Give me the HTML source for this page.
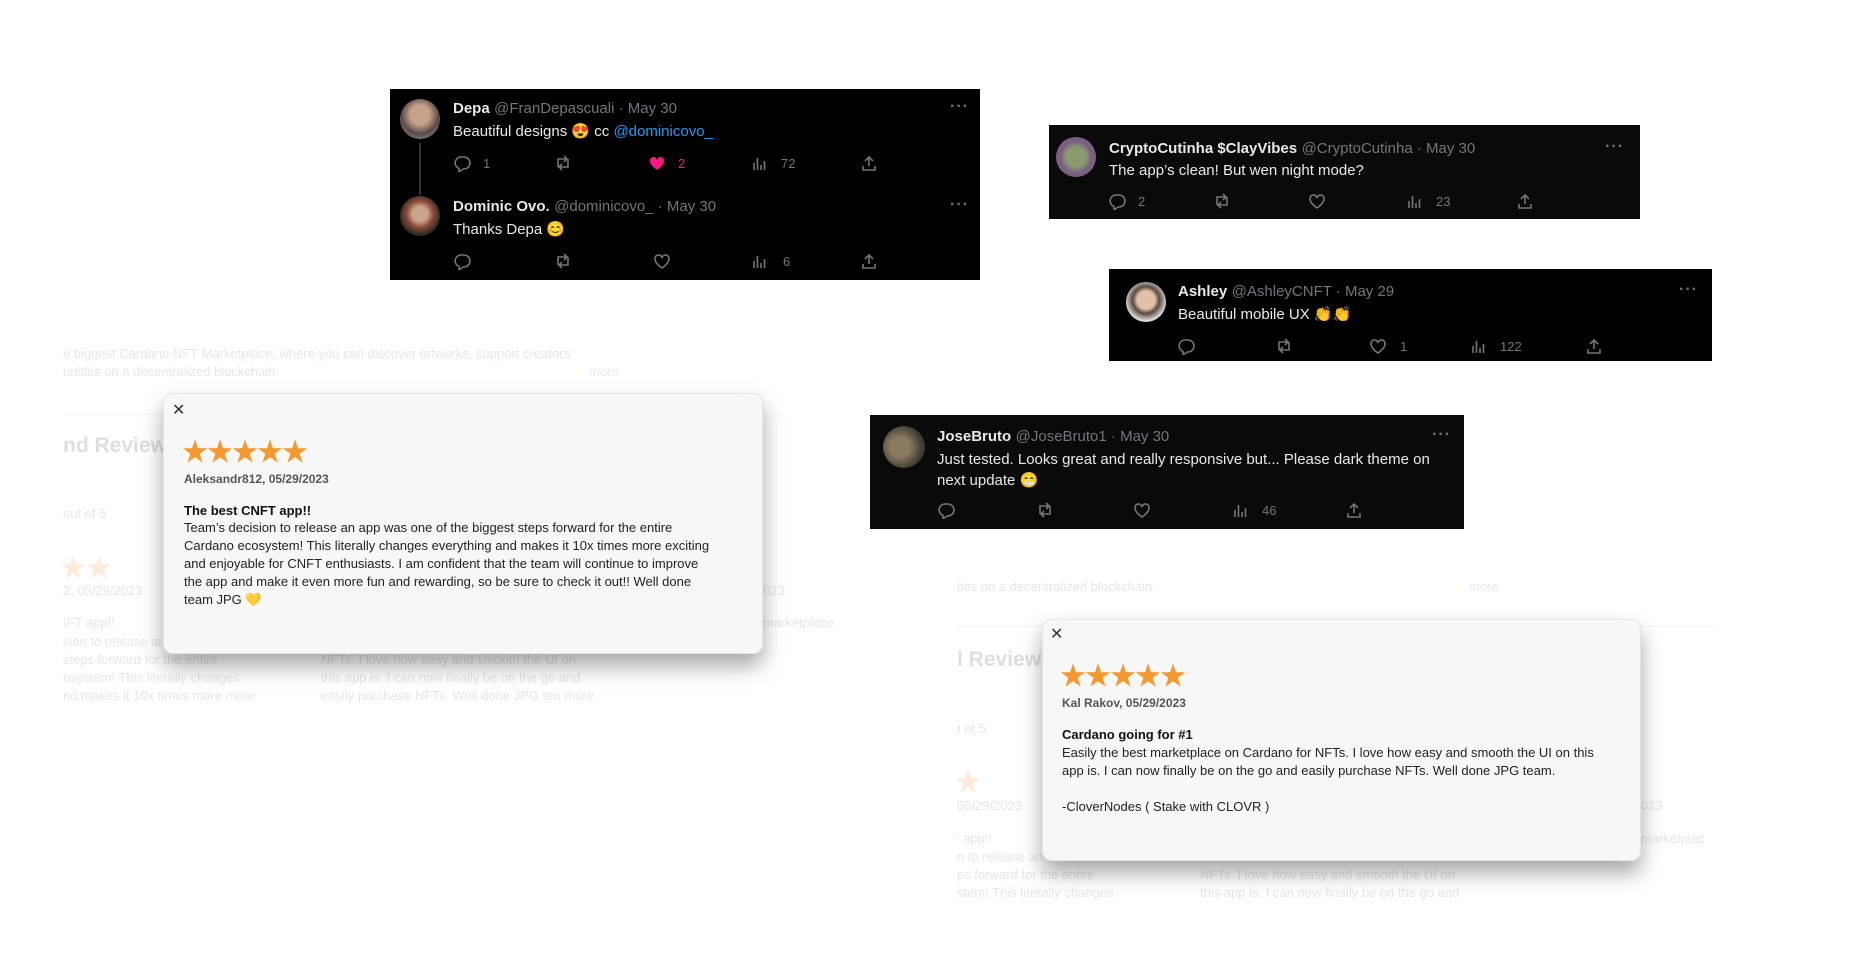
<!DOCTYPE html>
<html><head><meta charset="utf-8">
<style>
*{margin:0;padding:0;box-sizing:border-box}
body{width:1864px;height:958px;background:#fff;position:relative;overflow:hidden;font-family:"Liberation Sans","Noto Sans CJK SC",sans-serif}
.a{position:absolute;white-space:nowrap}
.tw{position:absolute;background:#000}
.av{position:absolute;border-radius:50%}
.nm{font-weight:bold;color:#e7e9ea;font-size:15px}
.hd{color:#71767b;font-size:15px;font-weight:normal}
.tx{color:#e7e9ea;font-size:15px}
.dots{color:#71767b;font-size:16px;letter-spacing:1px;font-weight:bold}
.ic{position:absolute;width:18px;height:18px}
.cnt{position:absolute;color:#71767b;font-size:13px}
.fd{position:absolute;white-space:nowrap;color:#e6e6e6;font-size:13px}
.rv{position:absolute;background:#f7f7f7;border-radius:10px;border:1px solid #e4e4e4;box-shadow:0 12px 22px rgba(0,0,0,.35)}
.rv .a{color:#222}
.st{color:#f4992f;font-size:26px;letter-spacing:-1px}
.body{font-size:13px;line-height:18px;color:#222}
</style></head><body>

<div class="fd" style="left:63px;top:346px">e biggest Cardano NFT Marketplace, where you can discover artworks, support creators</div>
<div class="fd" style="left:63px;top:364px">unities on a decentralized blockchain.</div>
<div class="fd" style="left:589px;top:364px;color:#e3e9f5">more</div>
<div style="position:absolute;left:63px;top:414px;width:720px;height:1px;background:#f3f3f3"></div>
<div class="fd" style="left:63px;top:434px;font-size:21px;font-weight:bold;color:#dedede">nd Reviews</div>
<div class="fd" style="left:63px;top:506px">out of 5</div>
<div class="fd" style="left:60px;top:548px;font-size:26px;color:#fcebdb">★★</div>
<div class="fd" style="left:63px;top:583px">2, 05/29/2023</div>
<div class="fd" style="left:63px;top:615px">IFT app!!</div>
<div class="fd" style="left:63px;top:634px">sion to release an</div>
<div class="fd" style="left:63px;top:652px">steps forward for the entire</div>
<div class="fd" style="left:63px;top:670px">osystem! This literally changes</div>
<div class="fd" style="left:63px;top:688px">nd makes it 10x times more <span style="color:#e3e9f5">more</span></div>
<div class="fd" style="left:321px;top:652px">NFTs. I love how easy and smooth the UI on</div>
<div class="fd" style="left:321px;top:670px">this app is. I can now finally be on the go and</div>
<div class="fd" style="left:321px;top:688px">easily purchase NFTs. Well done JPG tea <span style="color:#e3e9f5">more</span></div>
<div class="fd" style="left:763px;top:583px">023</div>
<div class="fd" style="left:763px;top:615px">marketplace</div>

<div class="fd" style="left:957px;top:579px">ties on a decentralized blockchain.</div>
<div class="fd" style="left:1469px;top:579px;color:#e3e9f5">more</div>
<div style="position:absolute;left:957px;top:626px;width:760px;height:1px;background:#f3f3f3"></div>
<div class="fd" style="left:957px;top:648px;font-size:21px;font-weight:bold;color:#dedede">l Reviews</div>
<div class="fd" style="left:957px;top:721px">t of 5</div>
<div class="fd" style="left:955px;top:762px;font-size:26px;color:#fcebdb">★</div>
<div class="fd" style="left:957px;top:798px">05/29/2023</div>
<div class="fd" style="left:957px;top:831px">' app!!</div>
<div class="fd" style="left:957px;top:849px">n to release an</div>
<div class="fd" style="left:957px;top:867px">ps forward for the entire</div>
<div class="fd" style="left:957px;top:885px">stem! This literally changes</div>
<div class="fd" style="left:1200px;top:867px">NFTs. I love how easy and smooth the UI on</div>
<div class="fd" style="left:1200px;top:885px">this app is. I can now finally be on the go and</div>
<div class="fd" style="left:1641px;top:798px">023</div>
<div class="fd" style="left:1641px;top:831px">marketplac</div>

<svg width="0" height="0" style="position:absolute">
<defs>
<g id="rp"><path d="M7 3h4a6 6 0 0 1 0 12h-1l-4 3v-3.5A6 6 0 0 1 7 3z" fill="none" stroke="#71767b" stroke-width="1.6"/></g>
<g id="rt"><path d="M4 13V5h9M10 2l3 3-3 3M14 5v8H5M8 16l-3-3 3-3" fill="none" stroke="#71767b" stroke-width="1.6" transform="translate(1,0)"/></g>
<g id="lk"><path d="M9 16S2 11.5 2 7a3.5 3.5 0 0 1 7-1 3.5 3.5 0 0 1 7 1c0 4.5-7 9-7 9z" fill="none" stroke="#71767b" stroke-width="1.6"/></g>
<g id="lkf"><path d="M9 16S2 11.5 2 7a3.5 3.5 0 0 1 7-1 3.5 3.5 0 0 1 7 1c0 4.5-7 9-7 9z" fill="#f91880"/></g>
<g id="vw"><path d="M4 16V9M7.5 16V4M11 16v-5M14.5 16V7" stroke="#71767b" stroke-width="1.6"/></g>
<g id="sh"><path d="M9 12V3M5 7l4-4 4 4M3 12v4h12v-4" fill="none" stroke="#71767b" stroke-width="1.6"/></g>
</defs></svg>

<div class="tw" style="left:390px;top:89px;width:590px;height:191px"></div>
<div class="av" style="left:400px;top:99px;width:40px;height:40px;background:radial-gradient(circle at 50% 40%,#c9a28a 0 30%,#5a4a48 60%,#9aa 100%)"></div>
<div style="position:absolute;left:419px;top:143px;width:2px;height:52px;background:#333"></div>
<div class="a" style="left:453px;top:100px"><span class="nm">Depa</span> <span class="hd">@FranDepascuali · May 30</span></div>
<div class="a tx" style="left:453px;top:122px">Beautiful designs 😍 cc <span style="color:#1d9bf0">@dominicovo_</span></div>
<div class="a dots" style="left:950px;top:98px">···</div>
<svg class="ic" style="left:453px;top:154px"><use href="#rp"/></svg><div class="cnt" style="left:483px;top:156px">1</div>
<svg class="ic" style="left:553px;top:154px"><use href="#rt"/></svg>
<svg class="ic" style="left:648px;top:154px"><use href="#lkf"/></svg><div class="cnt" style="left:678px;top:156px;color:#f91880">2</div>
<svg class="ic" style="left:750px;top:154px"><use href="#vw"/></svg><div class="cnt" style="left:781px;top:156px">72</div>
<svg class="ic" style="left:860px;top:154px"><use href="#sh"/></svg>
<div class="av" style="left:400px;top:196px;width:40px;height:40px;background:radial-gradient(circle at 50% 45%,#c9a48a 0 25%,#8a4a3a 45%,#2a2a22 70%)"></div>
<div class="a" style="left:453px;top:198px"><span class="nm">Dominic Ovo.</span> <span class="hd">@dominicovo_ · May 30</span></div>
<div class="a tx" style="left:453px;top:220px">Thanks Depa 😊</div>
<div class="a dots" style="left:950px;top:196px">···</div>
<svg class="ic" style="left:453px;top:252px"><use href="#rp"/></svg>
<svg class="ic" style="left:553px;top:252px"><use href="#rt"/></svg>
<svg class="ic" style="left:653px;top:252px"><use href="#lk"/></svg>
<svg class="ic" style="left:750px;top:252px"><use href="#vw"/></svg><div class="cnt" style="left:783px;top:254px">6</div>
<svg class="ic" style="left:860px;top:252px"><use href="#sh"/></svg>

<div class="tw" style="left:1049px;top:125px;width:591px;height:94px;background:#0a0a0a"></div>
<div class="av" style="left:1056px;top:137px;width:40px;height:40px;background:radial-gradient(circle at 50% 50%,#8a9a70 0 35%,#7a6080 55%)"></div>
<div class="a" style="left:1109px;top:140px"><span class="nm">CryptoCutinha $ClayVibes</span> <span class="hd">@CryptoCutinha · May 30</span></div>
<div class="a tx" style="left:1109px;top:162px">The app’s clean! But wen night mode?</div>
<div class="a dots" style="left:1605px;top:138px">···</div>
<svg class="ic" style="left:1108px;top:192px"><use href="#rp"/></svg><div class="cnt" style="left:1138px;top:194px">2</div>
<svg class="ic" style="left:1212px;top:192px"><use href="#rt"/></svg>
<svg class="ic" style="left:1308px;top:192px"><use href="#lk"/></svg>
<svg class="ic" style="left:1405px;top:192px"><use href="#vw"/></svg><div class="cnt" style="left:1436px;top:194px">23</div>
<svg class="ic" style="left:1516px;top:192px"><use href="#sh"/></svg>

<div class="tw" style="left:1109px;top:269px;width:603px;height:92px"></div>
<div class="av" style="left:1126px;top:282px;width:40px;height:40px;background:radial-gradient(circle at 50% 45%,#e0c0a8 0 30%,#5a4a40 45%,#ddd 70%)"></div>
<div class="a" style="left:1178px;top:283px"><span class="nm">Ashley</span> <span class="hd">@AshleyCNFT · May 29</span></div>
<div class="a tx" style="left:1178px;top:305px">Beautiful mobile UX 👏👏</div>
<div class="a dots" style="left:1679px;top:281px">···</div>
<svg class="ic" style="left:1177px;top:337px"><use href="#rp"/></svg>
<svg class="ic" style="left:1274px;top:337px"><use href="#rt"/></svg>
<svg class="ic" style="left:1369px;top:337px"><use href="#lk"/></svg><div class="cnt" style="left:1400px;top:339px">1</div>
<svg class="ic" style="left:1469px;top:337px"><use href="#vw"/></svg><div class="cnt" style="left:1500px;top:339px">122</div>
<svg class="ic" style="left:1585px;top:337px"><use href="#sh"/></svg>

<div class="tw" style="left:870px;top:415px;width:594px;height:114px;background:#0a0a0a"></div>
<div class="av" style="left:883px;top:426px;width:42px;height:42px;background:radial-gradient(circle at 40% 50%,#8a7a60 0 30%,#3a3a30 70%)"></div>
<div class="a" style="left:937px;top:428px"><span class="nm">JoseBruto</span> <span class="hd">@JoseBruto1 · May 30</span></div>
<div class="a tx" style="left:937px;top:451px">Just tested. Looks great and really responsive but... Please dark theme on</div>
<div class="a tx" style="left:937px;top:471px">next update 😁</div>
<div class="a dots" style="left:1432px;top:426px">···</div>
<svg class="ic" style="left:937px;top:501px"><use href="#rp"/></svg>
<svg class="ic" style="left:1035px;top:501px"><use href="#rt"/></svg>
<svg class="ic" style="left:1133px;top:501px"><use href="#lk"/></svg>
<svg class="ic" style="left:1231px;top:501px"><use href="#vw"/></svg><div class="cnt" style="left:1262px;top:503px">46</div>
<svg class="ic" style="left:1345px;top:501px"><use href="#sh"/></svg>

<div class="rv" style="left:163px;top:393px;width:600px;height:261px"></div>
<div class="a" style="left:172px;top:400px;font-size:16px;color:#333">✕</div>
<div class="a st" style="left:182px;top:432px">★★★★★</div>
<div class="a" style="left:184px;top:472px;font-size:12px;color:#555;font-weight:bold">Aleksandr812, 05/29/2023</div>
<div class="a" style="left:184px;top:503px;font-size:13px;font-weight:bold;color:#111">The best CNFT app!!</div>
<div class="a body" style="left:184px;top:519px">Team’s decision to release an app was one of the biggest steps forward for the entire<br>Cardano ecosystem! This literally changes everything and makes it 10x times more exciting<br>and enjoyable for CNFT enthusiasts. I am confident that the team will continue to improve<br>the app and make it even more fun and rewarding, so be sure to check it out!! Well done<br>team JPG 💛</div>

<div class="rv" style="left:1042px;top:619px;width:599px;height:242px"></div>
<div class="a" style="left:1050px;top:624px;font-size:16px;color:#333">✕</div>
<div class="a st" style="left:1060px;top:656px">★★★★★</div>
<div class="a" style="left:1062px;top:696px;font-size:12px;color:#555;font-weight:bold">Kal Rakov, 05/29/2023</div>
<div class="a" style="left:1062px;top:727px;font-size:13px;font-weight:bold;color:#111">Cardano going for #1</div>
<div class="a body" style="left:1062px;top:744px">Easily the best marketplace on Cardano for NFTs. I love how easy and smooth the UI on this<br>app is. I can now finally be on the go and easily purchase NFTs. Well done JPG team.<br><br>-CloverNodes ( Stake with CLOVR )</div>

</body></html>
